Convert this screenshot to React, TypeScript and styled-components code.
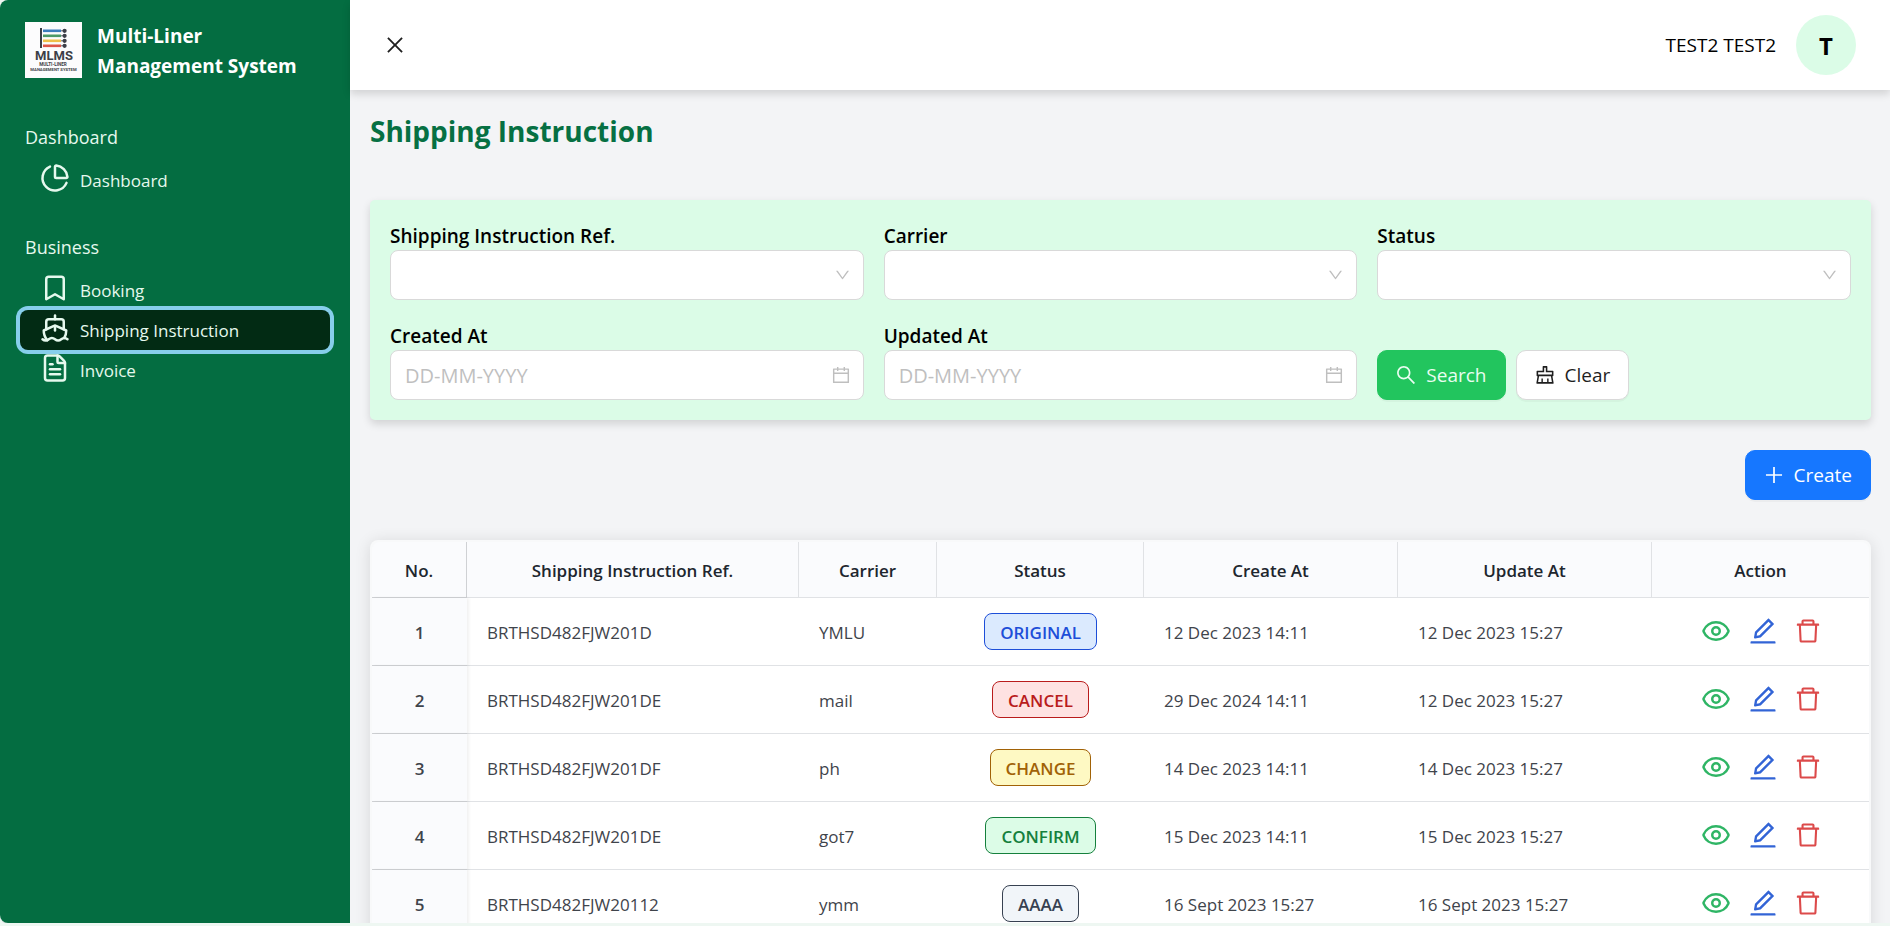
import React, { useState } from "react";
import styled, { createGlobalStyle, css } from "styled-components";
import { Bookmark, ChartPie, Eye, FileText, Ship } from "lucide-react";
import type { LucideIcon } from "lucide-react";
import {
  AiOutlineCalendar,
  AiOutlineClear,
  AiOutlineClose,
  AiOutlineDelete,
  AiOutlineDown,
  AiOutlineEdit,
  AiOutlinePlus,
  AiOutlineSearch,
} from "react-icons/ai";

const ANT_BOX = "64 64 896 896";

const GlobalStyle = createGlobalStyle`
  *, *::before, *::after { box-sizing: border-box; }
  body {
    margin: 0;
    background: #eef7f2;
    color: #000;
    font-family: "Open Sans", "Noto Sans", sans-serif;
    font-size: 18px;
    line-height: 30px;
  }
  button, input, select { font: inherit; color: inherit; }
  svg { display: block; flex: none; }
`;

const Shell = styled.div`
  display: flex;
  height: calc(100vh - 3px);
  overflow: hidden;
  border-radius: 8px 0 0 8px;
  background: #f3f4f6;
  box-shadow: 0 1px 0 #dcdfe2;
`;

/* Sidebar */

const Sidebar = styled.aside`
  flex: none;
  width: 350px;
  padding: 19px 20px;
  display: flex;
  flex-direction: column;
  gap: 30px;
  background: #046d41;
  color: #fff;
`;

const Brand = styled.div`
  display: flex;
  align-items: center;
  gap: 15px;
  margin-bottom: 9px;
  padding-left: 5px;
  font-size: 19px;
  font-weight: 700;
`;

const BrandName = styled.span`
  padding-top: 2px;
`;

const LogoArt = styled.svg`
  width: 57px;
  height: 56px;
  background: #fcfcfd;
  font-family: Roboto, sans-serif;
  font-weight: 700;
`;

const NavSection = styled.section`
  display: flex;
  flex-direction: column;
`;

const NavHeading = styled.h2`
  margin: 0 0 8px;
  padding: 2px 0 0 5px;
  font-size: 18px;
  font-weight: 400;
  color: #e6f9ee;
`;

const NavLink = styled.a<{ $active?: boolean }>`
  display: flex;
  align-items: center;
  gap: 10px;
  height: 40px;
  padding: 2px 20px 0;
  border-radius: 8px;
  font-size: 17px;
  color: #e6f9ee;
  text-decoration: none;

  svg {
    width: 30px;
    height: 30px;
    margin-bottom: 6px;
  }

  ${(p) =>
    p.$active &&
    css`
      background: #022b14;
      box-shadow: 0 0 0 4px #87ceeb;
    `}
`;

/* Top bar */

const Main = styled.div`
  flex: 1;
  min-width: 0;
  display: flex;
  flex-direction: column;
`;

const TopBar = styled.header`
  flex: none;
  display: flex;
  align-items: center;
  justify-content: space-between;
  height: 90px;
  padding: 0 34px 0 35px;
  background: #fff;
  box-shadow: 0 4px 8px rgba(0, 0, 0, 0.14);
`;

const IconButton = styled.button<{ $color?: string }>`
  display: flex;
  padding: 0;
  border: 0;
  background: none;
  color: ${(p) => p.$color ?? "#1f1f1f"};
  cursor: pointer;
`;

const User = styled.div`
  display: flex;
  align-items: center;
  gap: 20px;
  font-size: 19px;
`;

const Avatar = styled.span`
  display: grid;
  place-items: center;
  width: 60px;
  height: 60px;
  padding-top: 2px;
  border-radius: 50%;
  background: #dbfce7;
  font-size: 24px;
  font-weight: 700;
`;

/* Page content */

const Content = styled.main`
  flex: 1;
  min-height: 0;
  overflow: hidden;
  padding: 20px 19px 0 20px;
`;

const PageTitle = styled.h1`
  margin: 0 0 49px;
  padding-top: 1px;
  font-size: 28px;
  line-height: 40px;
  font-weight: 700;
  color: #067043;
`;

const FilterPanel = styled.form`
  display: grid;
  grid-template-columns: repeat(3, 1fr);
  gap: 20px;
  padding: 20px;
  border-radius: 5px;
  background: #dbfce7;
  box-shadow: 0 4px 8px rgba(0, 0, 0, 0.14);
`;

const Field = styled.div`
  display: flex;
  flex-direction: column;
`;

const FieldLabel = styled.label`
  padding-top: 2px;
  font-size: 19px;
  line-height: 28px;
  font-weight: 600;
`;

const Control = styled.div`
  position: relative;
  height: 50px;

  select,
  input {
    width: 100%;
    height: 100%;
    padding: 0 48px 0 14px;
    border: 1px solid #d9d9d9;
    border-radius: 8px;
    background: #fff;
    appearance: none;
    font-size: 20px;
  }

  input::placeholder {
    color: #bfbfbf;
    opacity: 1;
  }

  svg {
    position: absolute;
    top: 50%;
    right: 14px;
    translate: 0 -50%;
    color: #bfbfbf;
    pointer-events: none;
  }
`;

const ButtonRow = styled.div`
  display: flex;
  align-items: flex-end;
  gap: 10px;
`;

const CreateRow = styled.div`
  display: flex;
  justify-content: flex-end;
  margin: 30px 0 40px;
`;

const tones = {
  search: { bg: "#22c55e", fg: "#e9fdf1", edge: "#22c55e" },
  plain: { bg: "#fff", fg: "#1f1f1f", edge: "#d9d9d9" },
  create: { bg: "#1677ff", fg: "#fff", edge: "#1677ff" },
};

const ActionButton = styled.button<{ $tone: keyof typeof tones }>`
  display: flex;
  align-items: center;
  gap: 10px;
  height: 50px;
  padding: 0 18px;
  border: 1px solid ${(p) => tones[p.$tone].edge};
  border-radius: 10px;
  background: ${(p) => tones[p.$tone].bg};
  color: ${(p) => tones[p.$tone].fg};
  box-shadow: 0 2px 0 rgba(0, 0, 0, 0.03);
  font-size: 19px;
  cursor: pointer;
`;

/* Table */

const TableCard = styled.div`
  padding: 2px;
  border-radius: 8px;
  background: #f8f9fa;
  box-shadow: 0 2px 16px rgba(0, 0, 0, 0.12);
`;

const Table = styled.table`
  width: 100%;
  table-layout: fixed;
  border-collapse: separate;
  border-spacing: 0;
  color: #3f444b;
  font-size: 17px;
`;

const HeadCell = styled.th`
  height: 56px;
  padding: 2px 0 0;
  border-bottom: 1px solid #e0e2e5;
  border-right: 1px solid #e0e2e5;
  background: #fafbfd;
  color: #20262e;
  font-weight: 600;

  &:first-child {
    border-color: #cfd1d4;
    border-top-left-radius: 8px;
  }
  &:last-child {
    border-right: 0;
    border-top-right-radius: 8px;
  }
`;

const Cell = styled.td<{ $center?: boolean }>`
  height: 68px;
  padding: ${(p) => (p.$center ? "0 20px" : "2px 20px 0")};
  border-bottom: 1px solid #e0e2e5;
  background: #fff;
  text-align: ${(p) => (p.$center ? "center" : "left")};
  white-space: nowrap;
`;

const RowNumber = styled.th`
  position: relative;
  height: 68px;
  padding: 2px 0 0;
  border-bottom: 1px solid #cfd1d4;
  background: #fafbfd;
  box-shadow: 2px 0 3px rgba(0, 0, 0, 0.06);
  font-weight: 600;
`;

const badgeTones = {
  ORIGINAL: { bg: "#dbeafe", fg: "#1d4ed8" },
  CANCEL: { bg: "#fee2e2", fg: "#b91c1c" },
  CHANGE: { bg: "#fef9c3", fg: "#a16207" },
  CONFIRM: { bg: "#dcfce7", fg: "#15803d" },
  AAAA: { bg: "#f1f5f9", fg: "#374151" },
};

type Status = keyof typeof badgeTones;

const Badge = styled.span<{ $status: Status }>`
  display: inline-block;
  padding: 4px 15px 2px;
  border: 1px solid currentColor;
  border-radius: 8px;
  background: ${(p) => badgeTones[p.$status].bg};
  color: ${(p) => badgeTones[p.$status].fg};
  font-weight: 600;
  line-height: 29px;
  vertical-align: middle;
`;

const Actions = styled.div`
  display: flex;
  align-items: center;
  justify-content: center;
  gap: 18px;
  padding-bottom: 4px;
`;

const columns: [string, number][] = [
  ["No.", 95],
  ["Shipping Instruction Ref.", 332],
  ["Carrier", 138],
  ["Status", 207],
  ["Create At", 254],
  ["Update At", 254],
  ["Action", 217],
];

const rows: { ref: string; carrier: string; status: Status; created: string; updated: string }[] = [
  { ref: "BRTHSD482FJW201D", carrier: "YMLU", status: "ORIGINAL", created: "12 Dec 2023 14:11", updated: "12 Dec 2023 15:27" },
  { ref: "BRTHSD482FJW201DE", carrier: "mail", status: "CANCEL", created: "29 Dec 2024 14:11", updated: "12 Dec 2023 15:27" },
  { ref: "BRTHSD482FJW201DF", carrier: "ph", status: "CHANGE", created: "14 Dec 2023 14:11", updated: "14 Dec 2023 15:27" },
  { ref: "BRTHSD482FJW201DE", carrier: "got7", status: "CONFIRM", created: "15 Dec 2023 14:11", updated: "15 Dec 2023 15:27" },
  { ref: "BRTHSD482FJW20112", carrier: "ymm", status: "AAAA", created: "16 Sept 2023 15:27", updated: "16 Sept 2023 15:27" },
];

const sections: { title: string; links: { name: string; icon: LucideIcon }[] }[] = [
  { title: "Dashboard", links: [{ name: "Dashboard", icon: ChartPie }] },
  {
    title: "Business",
    links: [
      { name: "Booking", icon: Bookmark },
      { name: "Shipping Instruction", icon: Ship },
      { name: "Invoice", icon: FileText },
    ],
  },
];

const stripes = ["#3b7dbd", "#4c9a68", "#efc04a", "#dd5548"];

function Logo() {
  return (
    <LogoArt viewBox="0 0 57 56" role="img" aria-label="MLMS logo">
      <rect x="15" y="6" width="2" height="20" fill="#3c3f48" />
      {stripes.map((color, i) => (
        <g key={color}>
          <rect x="18" y={7.5 + i * 5} width="18" height="2.6" fill={color} />
          <path d={`M36 ${8.8 + i * 5}h3`} stroke="#3c3f48" strokeWidth="0.8" />
          <circle cx="39.6" cy={8.8 + i * 5} r="2.1" fill="#3c3f48" />
        </g>
      ))}
      <g fill="#3c3f48" textAnchor="middle">
        <text x="29" y="38" fontSize="13">MLMS</text>
        <text x="28" y="44" fontSize="4.6">MULTI-LINER</text>
        <text x="28.5" y="49" fontSize="4.2">MANAGEMENT SYSTEM</text>
      </g>
    </LogoArt>
  );
}

function SelectField({ id, label }: { id: string; label: string }) {
  return (
    <Field>
      <FieldLabel htmlFor={id}>{label}</FieldLabel>
      <Control>
        <select id={id} defaultValue="">
          <option value="" />
        </select>
        <AiOutlineDown viewBox={ANT_BOX} size={15} />
      </Control>
    </Field>
  );
}

function DateField({ id, label }: { id: string; label: string }) {
  return (
    <Field>
      <FieldLabel htmlFor={id}>{label}</FieldLabel>
      <Control>
        <input id={id} type="text" placeholder="DD-MM-YYYY" />
        <AiOutlineCalendar viewBox={ANT_BOX} size={18} />
      </Control>
    </Field>
  );
}

export default function App() {
  const [page, setPage] = useState("Shipping Instruction");

  return (
    <>
      <GlobalStyle />
      <Shell>
        <Sidebar>
          <Brand>
            <Logo />
            <BrandName>
              Multi-Liner
              <br />
              Management System
            </BrandName>
          </Brand>
          {sections.map((section) => (
            <NavSection key={section.title}>
              <NavHeading>{section.title}</NavHeading>
              {section.links.map(({ name, icon: Icon }) => (
                <NavLink key={name} href="#" $active={page === name} onClick={() => setPage(name)}>
                  <Icon />
                  {name}
                </NavLink>
              ))}
            </NavSection>
          ))}
        </Sidebar>

        <Main>
          <TopBar>
            <IconButton type="button" aria-label="Close menu">
              <AiOutlineClose viewBox={ANT_BOX} size={20} />
            </IconButton>
            <User>
              TEST2 TEST2
              <Avatar>T</Avatar>
            </User>
          </TopBar>

          <Content>
            <PageTitle>Shipping Instruction</PageTitle>

            <FilterPanel onSubmit={(e) => e.preventDefault()}>
              <SelectField id="ref" label="Shipping Instruction Ref." />
              <SelectField id="carrier" label="Carrier" />
              <SelectField id="status" label="Status" />
              <DateField id="created" label="Created At" />
              <DateField id="updated" label="Updated At" />
              <ButtonRow>
                <ActionButton type="submit" $tone="search">
                  <AiOutlineSearch viewBox={ANT_BOX} size={20} />
                  Search
                </ActionButton>
                <ActionButton type="reset" $tone="plain">
                  <AiOutlineClear viewBox={ANT_BOX} size={20} />
                  Clear
                </ActionButton>
              </ButtonRow>
            </FilterPanel>

            <CreateRow>
              <ActionButton type="button" $tone="create">
                <AiOutlinePlus viewBox={ANT_BOX} size={20} />
                Create
              </ActionButton>
            </CreateRow>

            <TableCard>
              <Table>
                <colgroup>
                  {columns.map(([name, width]) => (
                    <col key={name} width={width} />
                  ))}
                </colgroup>
                <thead>
                  <tr>
                    {columns.map(([name]) => (
                      <HeadCell key={name} scope="col">{name}</HeadCell>
                    ))}
                  </tr>
                </thead>
                <tbody>
                  {rows.map((row, i) => (
                    <tr key={i}>
                      <RowNumber scope="row">{i + 1}</RowNumber>
                      <Cell>{row.ref}</Cell>
                      <Cell>{row.carrier}</Cell>
                      <Cell $center>
                        <Badge $status={row.status}>{row.status}</Badge>
                      </Cell>
                      <Cell>{row.created}</Cell>
                      <Cell>{row.updated}</Cell>
                      <Cell>
                        <Actions>
                          <IconButton type="button" aria-label="View" $color="#2fb565">
                            <Eye size={30} />
                          </IconButton>
                          <IconButton type="button" aria-label="Edit" $color="#3264d6">
                            <AiOutlineEdit viewBox={ANT_BOX} size={28} />
                          </IconButton>
                          <IconButton type="button" aria-label="Delete" $color="#dc4a4a">
                            <AiOutlineDelete viewBox={ANT_BOX} size={26} />
                          </IconButton>
                        </Actions>
                      </Cell>
                    </tr>
                  ))}
                </tbody>
              </Table>
            </TableCard>
          </Content>
        </Main>
      </Shell>
    </>
  );
}
